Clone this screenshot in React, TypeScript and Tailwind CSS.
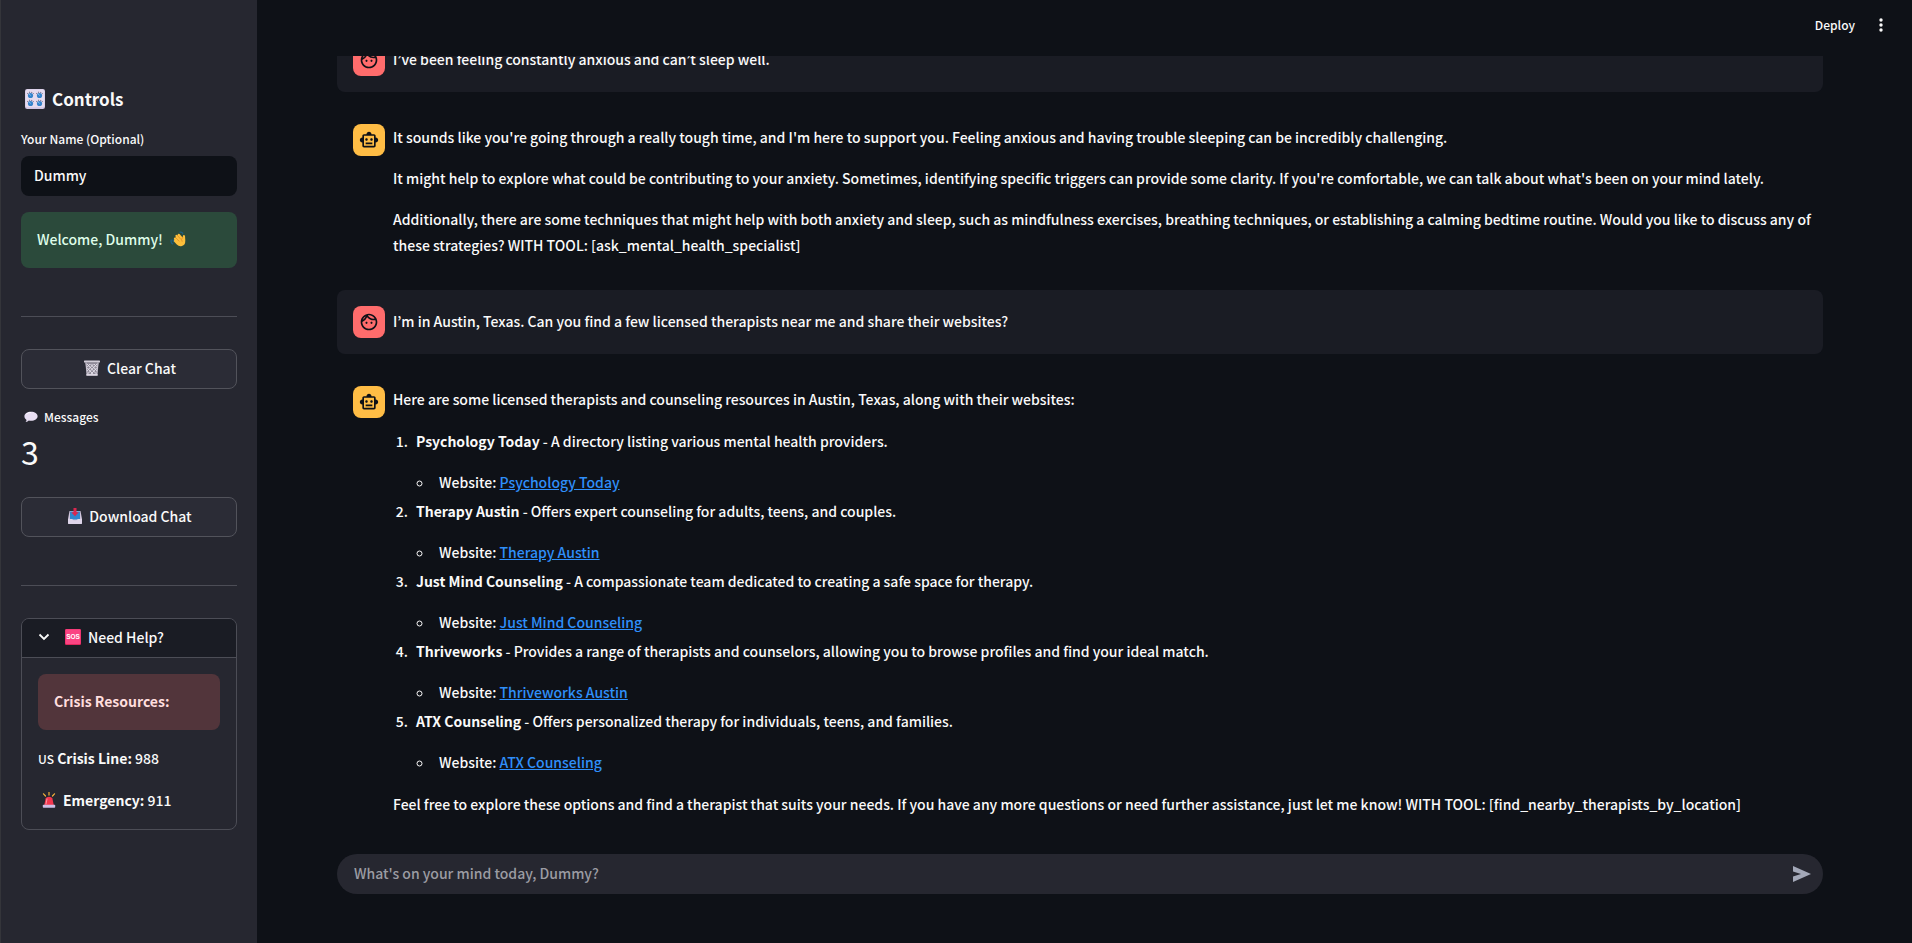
import React from "react";

const PAPER = "#e6dcef";

function KnobsEmoji() {
  const dots = [
    [5.5, 6.5],
    [14.5, 6.5],
    [5.5, 14.5],
    [14.5, 14.5],
  ];
  return (
    <svg viewBox="0 0 20 20" className="size-5 shrink-0" aria-hidden="true">
      <rect width="20" height="20" rx="2.2" fill="#d3c8e4" />
      <rect x=".6" y=".6" width="18.8" height="17.6" rx="1.8" fill={PAPER} />
      {dots.map(([x, y]) => (
        <g key={`${x}-${y}`}>
          <path d={`M${x - 3} ${y - 1.5}A3.4 3.4 0 0 1 ${x + 3} ${y - 1.5}`} fill="none" stroke="#7d7691" strokeWidth="1.3" strokeDasharray="1 1.1" />
          <circle cx={x} cy={y} r="2.6" fill="#3584cc" />
          <path d={`M${x} ${y}l-1.2 -1.5`} stroke="#a5d4f7" strokeWidth=".8" />
        </g>
      ))}
    </svg>
  );
}

function WaveEmoji() {
  return (
    <svg viewBox="0 0 16 16" className="size-4 shrink-0" aria-hidden="true">
      <path d="M10 1.2q2.2-.6 2.8 1.6M1.2 9.2q-.7 2.600 1.500 3.600M3.200 8.800q-.3 1.300.700 2" fill="none" stroke="#1d5f86" strokeWidth="1.300" strokeLinecap="round" />
      <path d="M3.800 7.200Q4.600 5.800 5.800 6.800L5.400 4.600Q6 3.200 7.400 4.200L8 3Q9.200 2.200 10 3.600L12.600 6.400L13 4.400Q14 3.200 15 4.800L15.300 9.500Q15.500 14.500 11.200 15.200Q8.600 15.500 6.800 13.500L4 10.600Q3.400 9.600 4.300 9Z" fill="#fdbf3b" />
      <path d="M5.800 6.800l3.200 3.300M7.400 4.400l3.300 3.800M12.600 6.400q-2 1.800-.6 4" fill="none" stroke="#e08a26" strokeWidth=".8" strokeLinecap="round" />
    </svg>
  );
}

function BinEmoji() {
  return (
    <svg viewBox="0 0 16 16" className="size-4 shrink-0" aria-hidden="true">
      <path d="M1.200 2.500h13.600L13.300 15.500H2.700z" fill="#8f8a98" />
      <path d="M3 4l9.500 10M6.500 4l6.500 7M3.300 8l6 6.500M10 4l3.200 3.500M13 4L3.500 14M9.500 4L3 11M12.700 8l-6 6.500M6 4L2.800 7.500" stroke="#e9e5ee" strokeWidth=".9" />
      <path d="M2 2.500L3.300 15M14 2.500L12.700 15" stroke="#cdc8d4" strokeWidth="1" />
      <rect x="0" y="0.500" width="16" height="2" rx=".6" fill="#d3ced9" />
      <rect x="2.300" y="14" width="11.400" height="1.800" rx=".6" fill="#dcd7e2" />
    </svg>
  );
}

function BubbleEmoji() {
  return (
    <svg viewBox="0 0 14 12" className="h-3 w-3.5 shrink-0" aria-hidden="true">
      <path d="M7 .8c3.800 0 6.600 1.900 6.600 4.500S10.800 9.800 7 9.800c-.8 0-1.500-.1-2.200-.2C4 10.400 2.800 11 1.600 10.900c.6-.6.900-1.300.9-2C1.100 8 .4 6.800.4 5.300.4 2.700 3.200.8 7 .8z" fill="#e9dff3" />
      <path d="M2.500 3q2-1.600 4.600-1.600" stroke="#fff" strokeWidth=".8" fill="none" />
    </svg>
  );
}

function InboxEmoji() {
  return (
    <svg viewBox="0 0 14 16" className="h-4 w-3.5 shrink-0" aria-hidden="true">
      <path d="M1.500 3h11L14 11v4q0 1-1 1H1q-1 0-1-1v-4z" fill="#cfc5dc" />
      <path d="M2 3.500h10v8H2z" fill="#2f86cf" />
      <path d="M0 11h4.200q.6 1.800 2.800 1.800T9.800 11H14v4q0 1-1 1H1q-1 0-1-1z" fill="#ded5e9" />
      <path d="M5.500 0h3v4.200h2.300L7 8.300 3.200 4.200h2.300z" fill="#d9274f" />
    </svg>
  );
}

function SosEmoji() {
  return (
    <svg viewBox="0 0 16 16" className="size-4 shrink-0" aria-hidden="true">
      <rect width="16" height="16" rx="1.200" fill="#e0275c" />
      <rect x=".5" y=".3" width="15" height="14.700" rx="1" fill="#fb4483" />
      <text x="8" y="10.300" textAnchor="middle" fontSize="6.500" fontWeight="700" fill="#fff" fontFamily="Liberation Sans, sans-serif">
        SOS
      </text>
    </svg>
  );
}

function SirenEmoji() {
  return (
    <svg viewBox="0 0 14 16" className="h-4 w-3.5 shrink-0" aria-hidden="true">
      <path d="M7 .3v2.800M1.500 1.800l2 2.200M12.500 1.800l-2 2.200" stroke="#f3b23c" strokeWidth="1.200" strokeLinecap="round" />
      <path d="M2.200 13.300L3.600 6.500Q4.200 4.800 7 4.800t3.400 1.700l1.400 6.800z" fill="#f4364f" />
      <path d="M5 7l-1 5" stroke="#ff93a0" strokeWidth="1" strokeLinecap="round" />
      <rect x=".8" y="12.800" width="12.400" height="2.900" rx=".8" fill="#cdbfe6" />
    </svg>
  );
}

function UserAvatar() {
  return (
    <div className="flex size-8 shrink-0 items-center justify-center rounded-lg bg-[#ff6c6c] text-[#0e1117]">
      <svg viewBox="0 0 24 24" className="size-5" fill="currentColor" aria-hidden="true">
        <path d="M10.250 13c0 .69-.56 1.250-1.250 1.250S7.750 13.690 7.750 13s.56-1.250 1.250-1.250 1.250.56 1.250 1.250zM15 11.750c-.69 0-1.250.56-1.250 1.250s.56 1.250 1.250 1.250 1.250-.56 1.250-1.250-.56-1.250-1.250-1.250zm7 .25c0 5.520-4.480 10-10 10S2 17.520 2 12 6.480 2 12 2s10 4.480 10 10zM10.660 4.120C12.060 6.440 14.600 8 17.500 8c.46 0 .91-.05 1.340-.12C17.440 5.560 14.900 4 12 4c-.46 0-.91.05-1.340.12zM4.420 9.470a8.046 8.046 0 0 0 3.660-4.440 8.046 8.046 0 0 0-3.660 4.440zM20 12c0-.78-.12-1.530-.33-2.240-.7.150-1.420.24-2.170.24a10 10 0 0 1-7.760-3.690A10.016 10.016 0 0 1 4 11.860c.01.040 0 .090 0 .140 0 4.410 3.590 8 8 8s8-3.590 8-8z" />
      </svg>
    </div>
  );
}

function BotAvatar() {
  return (
    <div className="flex size-8 shrink-0 items-center justify-center rounded-lg bg-[#ffbd45] text-[#0e1117]">
      <svg viewBox="0 0 24 24" className="size-5" fill="currentColor" aria-hidden="true">
        <path d="M20 9V7c0-1.100-.9-2-2-2h-3c0-1.660-1.340-3-3-3S9 3.340 9 5H6c-1.100 0-2 .9-2 2v2c-1.660 0-3 1.340-3 3s1.340 3 3 3v4c0 1.100.9 2 2 2h12c1.100 0 2-.9 2-2v-4c1.660 0 3-1.340 3-3s-1.340-3-3-3zm-2 10H6V7h12v12zm-9-6c-.83 0-1.500-.67-1.500-1.500S8.170 10 9 10s1.500.67 1.500 1.500S9.830 13 9 13zm7.500-1.500c0 .83-.67 1.500-1.500 1.500s-1.500-.67-1.500-1.500.67-1.500 1.500-1.500 1.500.67 1.500 1.500zM8 15h8v2H8v-2z" />
      </svg>
    </div>
  );
}

function UserMessage({ children }: { children: React.ReactNode }) {
  return (
    <article className="flex items-center gap-2 rounded-lg bg-[#1a1c24] py-4 pr-2 pl-4">
      <UserAvatar />
      <p className="min-w-0 flex-1 pb-[2px]">{children}</p>
    </article>
  );
}

function BotMessage({ children }: { children: React.ReactNode }) {
  return (
    <article className="flex items-start gap-2 py-4 pr-2 pl-4">
      <BotAvatar />
      <div className="flex min-w-0 flex-1 flex-col gap-[15px]">{children}</div>
    </article>
  );
}

const therapists = [
  { name: "Psychology Today", text: "A directory listing various mental health providers.", link: "Psychology Today" },
  { name: "Therapy Austin", text: "Offers expert counseling for adults, teens, and couples.", link: "Therapy Austin" },
  { name: "Just Mind Counseling", text: "A compassionate team dedicated to creating a safe space for therapy.", link: "Just Mind Counseling" },
  { name: "Thriveworks", text: "Provides a range of therapists and counselors, allowing you to browse profiles and find your ideal match.", link: "Thriveworks Austin" },
  { name: "ATX Counseling", text: "Offers personalized therapy for individuals, teens, and families.", link: "ATX Counseling" },
];

function Sidebar() {
  return (
    <aside className="w-[257px] shrink-0 border-l border-[#34353a] bg-[#262730] px-5 pt-[84px]">
      <h2 className="flex items-center gap-[7px] pl-1 text-[17px] leading-[30px] font-bold">
        <KnobsEmoji />
        Controls
      </h2>
      <label htmlFor="name" className="mt-[14px] block text-xs leading-[22px]">
        Your Name (Optional)
      </label>
      <input
        id="name"
        defaultValue="Dummy"
        className="mt-[6px] block h-10 w-full rounded-lg bg-[#0e1117] px-[13px] pb-[2px] outline-none"
      />
      <div className="mt-4 flex h-14 items-center gap-[7px] rounded-lg bg-[#2b4a3b] px-4 pb-[2px] text-[#dffde9]">
        Welcome, Dummy!
        <WaveEmoji />
      </div>
      <hr className="mt-12 border-[#4c4d56]" />
      <button className="mt-8 flex h-10 w-full items-center justify-center gap-[7px] rounded-lg border border-[#52535b] bg-[#2b2c36] pb-[2px] pl-[2px]">
        <BinEmoji />
        Clear Chat
      </button>
      <div className="mt-4 flex items-center gap-[6px] pl-[3px] text-xs leading-6">
        <BubbleEmoji />
        Messages
      </div>
      <div className="text-[32px] leading-[44px] font-normal">3</div>
      <button className="mt-6 flex h-10 w-full items-center justify-center gap-[7px] rounded-lg border border-[#52535b] bg-[#2b2c36] pb-[2px] pl-[2px]">
        <InboxEmoji />
        Download Chat
      </button>
      <hr className="mt-12 border-[#4c4d56]" />
      <details open className="mt-8 overflow-hidden rounded-lg border border-[#4c4d56]">
        <summary className="flex h-[39px] list-none items-center gap-[7px] border-b border-[#4c4d56] bg-[#1a1c24] px-4 pb-[2px]">
          <svg viewBox="0 0 12 12" className="mr-2 size-3" fill="none" stroke="#fafafa" strokeWidth="1.800" aria-hidden="true">
            <path d="M1.500 3.500L6 8l4.500-4.500" />
          </svg>
          <SosEmoji />
          Need Help?
        </summary>
        <div className="p-4">
          <div className="flex h-14 items-center rounded-lg bg-[#52353b] px-4 pb-[2px] font-bold text-[#ffdede]">Crisis Resources:</div>
          <p className="mt-[15px] leading-[26px]">
            <span className="text-xs">US</span> <strong>Crisis Line:</strong> 988
          </p>
          <p className="mt-4 flex items-center gap-[7px] pl-1 leading-[26px]">
            <SirenEmoji />
            <span>
              <strong>Emergency:</strong> 911
            </span>
          </p>
        </div>
      </details>
    </aside>
  );
}

export default function App() {
  return (
    <div className="flex h-screen bg-[#0e1117] font-['Noto_Sans_CJK_KR',sans-serif] text-sm leading-[26px] font-medium text-[#fafafa]">
      <Sidebar />
      <main className="flex min-w-0 flex-1 flex-col">
        <header className="flex h-14 shrink-0 items-start justify-end gap-[21px] pt-3 pr-[26px]">
          <button className="text-xs leading-[26px]">Deploy</button>
          <button aria-label="Main menu" className="flex h-[26px] w-[10px] items-center justify-center">
            <svg viewBox="0 0 4 14" className="h-3.5 w-1" fill="#fafafa" aria-hidden="true">
              <circle cx="2" cy="2" r="1.700" />
              <circle cx="2" cy="7" r="1.700" />
              <circle cx="2" cy="12" r="1.700" />
            </svg>
          </button>
        </header>
        <section className="flex min-h-0 flex-1 flex-col justify-end gap-4 overflow-hidden pr-[89px] pl-20">
          <UserMessage>I’ve been feeling constantly anxious and can’t sleep well.</UserMessage>
          <BotMessage>
            <p>
              It sounds like you're going through a really tough time, and I'm here to support you. Feeling anxious and having trouble sleeping can be
              incredibly challenging.
            </p>
            <p>
              It might help to explore what could be contributing to your anxiety. Sometimes, identifying specific triggers can provide some clarity. If
              you're comfortable, we can talk about what's been on your mind lately.
            </p>
            <p>
              Additionally, there are some techniques that might help with both anxiety and sleep, such as mindfulness exercises, breathing techniques, or
              establishing a calming bedtime routine. Would you like to discuss any of these strategies? WITH TOOL: [ask_mental_health_specialist]
            </p>
          </BotMessage>
          <UserMessage>I’m in Austin, Texas. Can you find a few licensed therapists near me and share their websites?</UserMessage>
          <BotMessage>
            <p>Here are some licensed therapists and counseling resources in Austin, Texas, along with their websites:</p>
            <ol className="my-px flex list-decimal flex-col gap-[3px] pl-[18px]">
              {therapists.map((t) => (
                <li key={t.name} className="pl-[5px]">
                  <p>
                    <strong>{t.name}</strong> - {t.text}
                  </p>
                  <ul className="mt-[15px] list-[circle] pl-[18px]">
                    <li className="pl-[5px]">
                      Website:{" "}
                      <a href="#" className="text-[#2f8ffa] underline">
                        {t.link}
                      </a>
                    </li>
                  </ul>
                </li>
              ))}
            </ol>
            <p>
              Feel free to explore these options and find a therapist that suits your needs. If you have any more questions or need further assistance,
              just let me know! WITH TOOL: [find_nearby_therapists_by_location]
            </p>
          </BotMessage>
        </section>
        <footer className="shrink-0 pt-[21px] pr-[89px] pb-[49px] pl-20">
          <form className="flex h-10 items-center rounded-full bg-[#262730] pr-3 pl-[17px]">
            <input
              aria-label="Message"
              placeholder="What's on your mind today, Dummy?"
              className="min-w-0 flex-1 bg-transparent pb-[2px] outline-none placeholder:text-[#9b9ca3]"
            />
            <button type="button" aria-label="Send" className="flex size-[18px] items-center justify-center">
              <svg viewBox="0 0 18 16" className="h-4 w-[18px]" fill="#a3a8b8" aria-hidden="true">
                <path d="M0 0L18 8 0 16V10.500L8 8 0 5.500z" />
              </svg>
            </button>
          </form>
        </footer>
      </main>
    </div>
  );
}
